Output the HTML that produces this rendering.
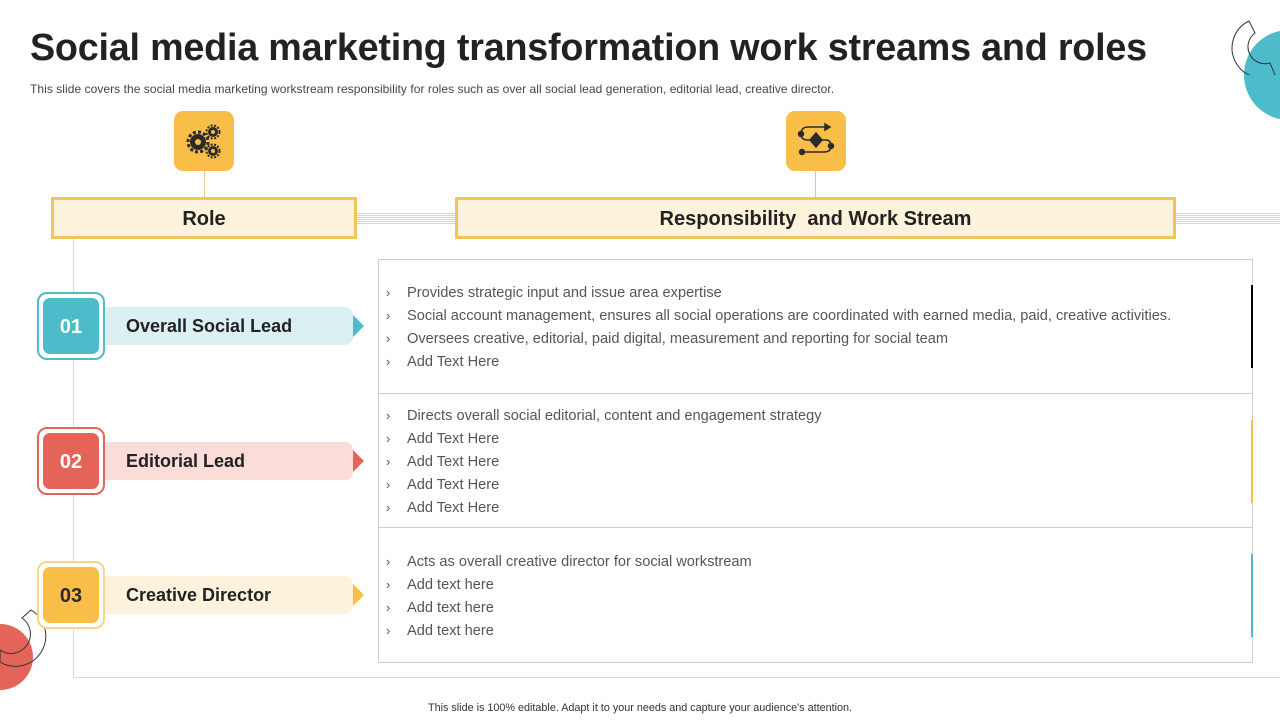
<!DOCTYPE html>
<html><head><meta charset="utf-8"><style>
*{margin:0;padding:0;box-sizing:border-box}
body{width:1280px;height:720px;position:relative;overflow:hidden;background:#fff;font-family:"Liberation Sans",Arial,sans-serif;color:#222}
.a{position:absolute}
h1{position:absolute;left:30px;top:26px;font-size:37.7px;font-weight:bold;color:#222;letter-spacing:-0.2px;white-space:nowrap}
.sub{left:30px;top:82px;font-size:12px;color:#444;white-space:nowrap;letter-spacing:0.05px}
.ic{width:60px;height:60px;background:#F8BE48;border-radius:9px}
.hdr{height:42px;border:3px solid #EFC65A;background:#FDF2DC;font-weight:bold;font-size:20px;text-align:center;line-height:38px;color:#222}
.lines{height:12px;background:repeating-linear-gradient(#fff 0,#fff 1px,#d4d4d4 1px,#d4d4d4 2px)}
.num{width:68px;height:68px;border-radius:10px;border:2px solid;padding:4px;background:#fff}
.num div{width:100%;height:100%;border-radius:7px;color:#fff;font-weight:bold;font-size:20px;text-align:center;line-height:58px}
.pill{left:104px;width:249px;height:38px;border-radius:0 8px 8px 0;font-weight:bold;font-size:18px;line-height:38px;padding-left:22px;color:#222}
.tri{width:0;height:0;border-top:11px solid transparent;border-bottom:11px solid transparent;border-left:11px solid}
.box{left:378px;width:875px;border:1px solid #ccc;background:#fff}
ul{list-style:none;position:absolute;left:386px;font-size:14.6px;color:#555}
li{height:23px;line-height:23px}
li span{display:inline-block;width:21px;font-size:13px}
</style></head><body>
<h1>Social media marketing transformation work streams and roles</h1>
<div class="a sub">This slide covers the social media marketing workstream responsibility for roles such as over all social lead generation, editorial lead, creative director.</div>

<div class="a" style="left:1244px;top:30px;width:90px;height:90px;border-radius:50%;background:#4DBBC9"></div>
<svg class="a" style="left:1230px;top:15px" width="50" height="60"><path d="M19 6 A28 28 0 0 0 45 60 L40 48 A17 17 0 0 1 25 18 Z" fill="none" stroke="#333" stroke-width="1"/></svg>
<div class="a" style="left:-33px;top:624px;width:66px;height:66px;border-radius:50%;background:#E5645A"></div>
<svg class="a" style="left:0;top:600px" width="50" height="70"><path d="M31 10 A25 25 0 0 1 0 62 L0 50 A14 14 0 0 0 22 18 Z" fill="none" stroke="#333" stroke-width="1"/></svg>

<div class="a ic" style="left:174px;top:111px"></div>
<svg class="a" style="left:184px;top:122px" width="40" height="40" fill="#2b2b2b"><circle cx="14" cy="20" r="8"/><circle cx="14" cy="20" r="10" fill="none" stroke="#2b2b2b" stroke-width="3" stroke-dasharray="3 2.2"/><circle cx="14" cy="20" r="3" fill="#F8BE48"/><circle cx="29" cy="10" r="5"/><circle cx="29" cy="10" r="6.5" fill="none" stroke="#2b2b2b" stroke-width="2" stroke-dasharray="2 1.5"/><circle cx="29" cy="10" r="2" fill="#F8BE48"/><circle cx="29" cy="29" r="5"/><circle cx="29" cy="29" r="6.5" fill="none" stroke="#2b2b2b" stroke-width="2" stroke-dasharray="2 1.5"/><circle cx="29" cy="29" r="2" fill="#F8BE48"/></svg>
<div class="a" style="left:204px;top:171px;width:1px;height:26px;background:#E8C98A"></div>

<div class="a ic" style="left:786px;top:111px"></div>
<svg class="a" style="left:796px;top:121px" width="40" height="40" fill="none" stroke="#2b2b2b" stroke-width="1.5"><path d="M5 13 Q5 6 12 6 L30 6"/><path d="M29 3 L34 6 L29 9 Z" fill="#2b2b2b"/><path d="M5 13 Q5 19 12 19 L30 19 Q35 19 35 25 Q35 31 28 31 L6 31"/><circle cx="5" cy="13" r="2.5" fill="#2b2b2b"/><circle cx="35" cy="25" r="2.5" fill="#2b2b2b"/><circle cx="6" cy="31" r="2.5" fill="#2b2b2b"/><path d="M20 12 L26 19 L20 26 L14 19 Z" fill="#2b2b2b"/></svg>
<div class="a" style="left:815px;top:171px;width:1px;height:26px;background:#E8C98A"></div>

<div class="a lines" style="left:356px;top:212px;width:100px"></div>
<div class="a lines" style="left:1175px;top:212px;width:105px"></div>
<div class="a hdr" style="left:51px;top:197px;width:306px">Role</div>
<div class="a hdr" style="left:455px;top:197px;width:721px">Responsibility &nbsp;and Work Stream</div>

<div class="a" style="left:73px;top:239px;width:1px;height:439px;background:#d8d8d8"></div>
<div class="a" style="left:73px;top:677px;width:1207px;height:1px;background:#d8d8d8"></div>

<div class="a box" style="top:259px;height:404px"></div>
<div class="a" style="left:378px;top:393px;width:875px;height:1px;background:#ccc"></div>
<div class="a" style="left:378px;top:527px;width:875px;height:1px;background:#ccc"></div>
<div class="a" style="left:1251px;top:285px;width:2px;height:83px;background:#000"></div>
<div class="a" style="left:1251px;top:420px;width:2px;height:83px;background:#F8BE48"></div>
<div class="a" style="left:1251px;top:554px;width:2px;height:83px;background:#4DBBC9"></div>

<div class="a pill" style="top:307px;background:#DBF0F3">Overall Social Lead</div>
<div class="a tri" style="left:353px;top:315px;border-left-color:#4DBBC9"></div>
<div class="a num" style="left:37px;top:292px;border-color:#4DBBC9"><div style="background:#4DBBC9">01</div></div>

<div class="a pill" style="top:442px;background:#FADCD8">Editorial Lead</div>
<div class="a tri" style="left:353px;top:450px;border-left-color:#E5645A"></div>
<div class="a num" style="left:37px;top:427px;border-color:#E5645A"><div style="background:#E5645A">02</div></div>

<div class="a pill" style="top:576px;background:#FDF2DC">Creative Director</div>
<div class="a tri" style="left:353px;top:584px;border-left-color:#F8BE48"></div>
<div class="a num" style="left:37px;top:561px;border-color:#F5D68A"><div style="background:#F8BE48;color:#2b2b2b">03</div></div>

<ul style="top:281px"><li><span>›</span>Provides strategic input and issue area expertise</li><li><span>›</span>Social account management, ensures all social operations are coordinated with earned media, paid, creative activities.</li><li><span>›</span>Oversees creative, editorial, paid digital, measurement and reporting for social team</li><li><span>›</span>Add Text Here</li></ul>
<ul style="top:404px"><li><span>›</span>Directs overall social editorial, content and engagement strategy</li><li><span>›</span>Add Text Here</li><li><span>›</span>Add Text Here</li><li><span>›</span>Add Text Here</li><li><span>›</span>Add Text Here</li></ul>
<ul style="top:550px"><li><span>›</span>Acts as overall creative director for social workstream</li><li><span>›</span>Add text here</li><li><span>›</span>Add text here</li><li><span>›</span>Add text here</li></ul>

<div class="a" style="left:0;width:1280px;top:702px;text-align:center;font-size:10.8px;color:#333">This slide is 100% editable. Adapt it to your needs and capture your audience's attention.</div>
</body></html>
